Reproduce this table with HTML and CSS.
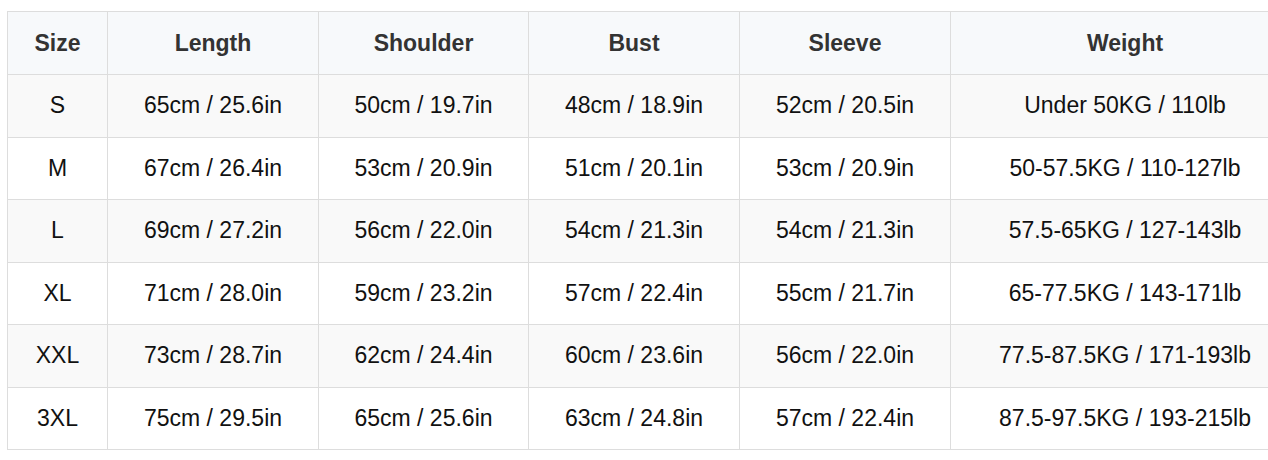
FILE: index.html
```html
<!DOCTYPE html>
<html lang="en">
<head>
<meta charset="utf-8">
<title>Size Chart</title>
<link rel="stylesheet" href="styles.css">
</head>
<body>
<div class="wrap">
<table class="size-table">
  <colgroup>
    <col class="c-size"><col class="c-wide"><col class="c-narrow"><col class="c-wide"><col class="c-wide"><col class="c-weight">
  </colgroup>
  <thead>
    <tr><th>Size</th><th>Length</th><th>Shoulder</th><th>Bust</th><th>Sleeve</th><th>Weight</th></tr>
  </thead>
  <tbody>
    <tr class="odd"><td>S</td><td>65cm / 25.6in</td><td>50cm / 19.7in</td><td>48cm / 18.9in</td><td>52cm / 20.5in</td><td>Under 50KG / 110lb</td></tr>
    <tr><td>M</td><td>67cm / 26.4in</td><td>53cm / 20.9in</td><td>51cm / 20.1in</td><td>53cm / 20.9in</td><td>50-57.5KG / 110-127lb</td></tr>
    <tr class="odd"><td>L</td><td>69cm / 27.2in</td><td>56cm / 22.0in</td><td>54cm / 21.3in</td><td>54cm / 21.3in</td><td>57.5-65KG / 127-143lb</td></tr>
    <tr><td>XL</td><td>71cm / 28.0in</td><td>59cm / 23.2in</td><td>57cm / 22.4in</td><td>55cm / 21.7in</td><td>65-77.5KG / 143-171lb</td></tr>
    <tr class="odd"><td>XXL</td><td>73cm / 28.7in</td><td>62cm / 24.4in</td><td>60cm / 23.6in</td><td>56cm / 22.0in</td><td>77.5-87.5KG / 171-193lb</td></tr>
    <tr><td>3XL</td><td>75cm / 29.5in</td><td>65cm / 25.6in</td><td>63cm / 24.8in</td><td>57cm / 22.4in</td><td>87.5-97.5KG / 193-215lb</td></tr>
  </tbody>
</table>
</div>
</body>
</html>
```
FILE: styles.css
```css
html, body {
  margin: 0;
  padding: 0;
  background: #ffffff;
  overflow: hidden;
}
.wrap {
  margin: 11px 0 0 7px;
  width: 1261px;
  overflow: hidden;
}
.size-table {
  border-collapse: collapse;
  table-layout: fixed;
  width: 1292px;
  font-family: "Liberation Sans", Arial, sans-serif;
  font-size: 23px;
  color: #111111;
}
.c-size { width: 100px; }
.c-wide { width: 211px; }
.c-narrow { width: 210px; }
.c-weight { width: 349px; }
.size-table th,
.size-table td {
  border: 1px solid #dddddd;
  text-align: center;
  vertical-align: middle;
  padding: 0 4px;
  white-space: nowrap;
}
.size-table th {
  height: 62px;
  background: #f7f9fb;
  color: #333333;
  font-weight: bold;
  font-size: 23px;
}
.size-table tbody tr {
  height: 62.5px;
}
.size-table tbody tr.odd {
  background: #f9f9f9;
}
```
